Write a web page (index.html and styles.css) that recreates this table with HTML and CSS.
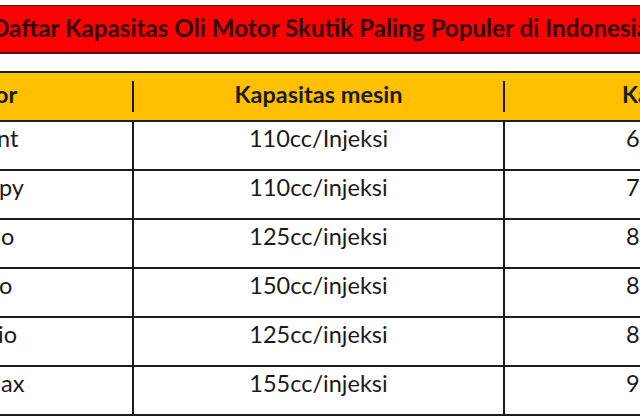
FILE: index.html
```html
<!DOCTYPE html>
<html lang="id">
<head>
<meta charset="utf-8">
<title>Daftar Kapasitas Oli Motor Skutik</title>
<link rel="stylesheet" href="styles.css">
</head>
<body>
<div class="title">Daftar Kapasitas Oli Motor Skutik Paling Populer di Indonesia</div>
<div class="table">
  <div class="row head">
    <div class="cell c1"><span class="frag f-or">or</span></div>
    <div class="cell c2">Kapasitas mesin</div>
    <div class="cell c3 h3">Kapasitas oli</div>
  </div>
  <div class="row">
    <div class="cell c1"><span class="frag f-nt">nt</span></div>
    <div class="cell c2">110cc/Injeksi</div>
    <div class="cell c3">650 ml</div>
  </div>
  <div class="row">
    <div class="cell c1"><span class="frag f-py">py</span></div>
    <div class="cell c2">110cc/injeksi</div>
    <div class="cell c3">700 ml</div>
  </div>
  <div class="row">
    <div class="cell c1"><span class="frag f-o1">o</span></div>
    <div class="cell c2">125cc/injeksi</div>
    <div class="cell c3">800 ml</div>
  </div>
  <div class="row">
    <div class="cell c1"><span class="frag f-o2">o</span></div>
    <div class="cell c2">150cc/injeksi</div>
    <div class="cell c3">800 ml</div>
  </div>
  <div class="row">
    <div class="cell c1"><span class="frag f-io">io</span></div>
    <div class="cell c2">125cc/injeksi</div>
    <div class="cell c3">800 ml</div>
  </div>
  <div class="row">
    <div class="cell c1"><span class="frag f-ax">ax</span></div>
    <div class="cell c2">155cc/injeksi</div>
    <div class="cell c3">900 ml</div>
  </div>
</div>
</body>
</html>
```
FILE: styles.css
```css
html, body {
  margin: 0;
  padding: 0;
  overflow: hidden;
  background: #ffffff;
  width: 640px;
  height: 420px;
}
body {
  font-family: Lato, "Liberation Sans", sans-serif;
  color: #1a1a1a;
}
.title {
  margin-top: 5px;
  height: 46px;
  background: #ff0000;
  border-top: 1px solid #5a1010;
  border-bottom: 2px solid #5a1010;
  color: #330000;
  font-weight: 700;
  font-size: 24.2px;
  line-height: 44px;
  white-space: nowrap;
  text-indent: -9px;
  overflow: hidden;
}
.table {
  margin-top: 17px;
  width: 760px;
  border-top: 2px solid #1c1c1c;
}
.row {
  display: grid;
  grid-template-columns: 134px 371px 1fr;
  height: 47px;
  border-bottom: 2px solid #1c1c1c;
}
.row.head {
  background: #ffc000;
  font-weight: 700;
  align-items: center;
}
.cell {
  font-size: 23.5px;
  line-height: 27px;
  white-space: nowrap;
  overflow: hidden;
  padding-top: 3px;
}
.head .cell {
  padding-top: 0;
  padding-bottom: 4px;
}
.c1 {
  border-right: 2px solid #1c1c1c;
}
.c2 {
  border-right: 2px solid #1c1c1c;
  text-align: center;
}
.c3 {
  padding-left: 121px;
}
.c3.h3 {
  padding-left: 117px;
}
.frag {
  display: inline-block;
}
.f-or { margin-left: -5px; }
.f-nt { margin-left: -3px; }
.f-py { margin-left: -1px; }
.f-o1 { margin-left: 1px; }
.f-o2 { margin-left: -1px; }
.f-io { margin-left: -2px; }
.f-ax { margin-left: 1px; }
```
